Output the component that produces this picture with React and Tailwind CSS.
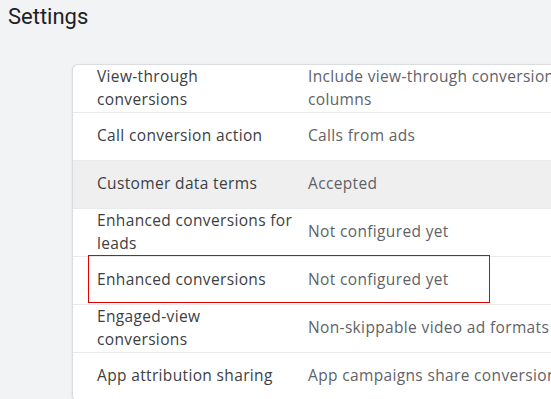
const rows = [
  { label: ["View-through", "conversions"], value: ["Include view-through conversions in conversion", "columns"] },
  { label: ["Call conversion action"], value: ["Calls from ads"] },
  { label: ["Customer data terms"], value: ["Accepted"], gray: true },
  { label: ["Enhanced conversions for", "leads"], value: ["Not configured yet"] },
  { label: ["Enhanced conversions"], value: ["Not configured yet"], marked: true },
  { label: ["Engaged-view", "conversions"], value: ["Non-skippable video ad formats"] },
  { label: ["App attribution sharing"], value: ["App campaigns share conversions data with partners"] },
];

function Lines({ lines }) {
  return (
    <span className="whitespace-nowrap">
      {lines.map((l, i) => (
        <span key={i} className="block">
          {l}
        </span>
      ))}
    </span>
  );
}

export default function App() {
  return (
    <div className="w-full h-[399px] overflow-hidden bg-[#f1f3f4]">
      <h1
        className="pl-2 pt-[3px] h-[64px] text-[22px] leading-[28px] text-[#202124] font-normal"
        style={{ fontFamily: "Roboto, sans-serif" }}
      >
        Settings
      </h1>
      <div
        className="ml-[72px] w-[520px] bg-white rounded-l-[6px] border-l border-t border-[#dadce0] shadow-[0_1px_2px_rgba(60,64,67,0.15)]"
        style={{ fontFamily: "'Open Sans', Roboto, sans-serif" }}
      >
        {rows.map((r) => (
          <div
            key={r.label.join(" ")}
            className={`relative flex h-12 border-b border-[#e8eaed] ${r.gray ? "bg-[#efefef]" : ""}`}
          >
            <div className="w-[235px] shrink-0 pl-6 pr-3 pb-[2px] flex items-center text-[15.5px] leading-[23px] tracking-[0.35px] text-[#3c4043]">
              <Lines lines={r.label} />
            </div>
            <div className="flex-1 pb-[2px] flex items-center text-[15.5px] leading-[23px] tracking-[0.35px] text-[#5f6368]">
              <Lines lines={r.value} />
            </div>
            {r.marked && (
              <div className="absolute left-[15px] top-[-2px] w-[402px] h-[48px] border border-[#e30000]" />
            )}
          </div>
        ))}
      </div>
    </div>
  );
}
